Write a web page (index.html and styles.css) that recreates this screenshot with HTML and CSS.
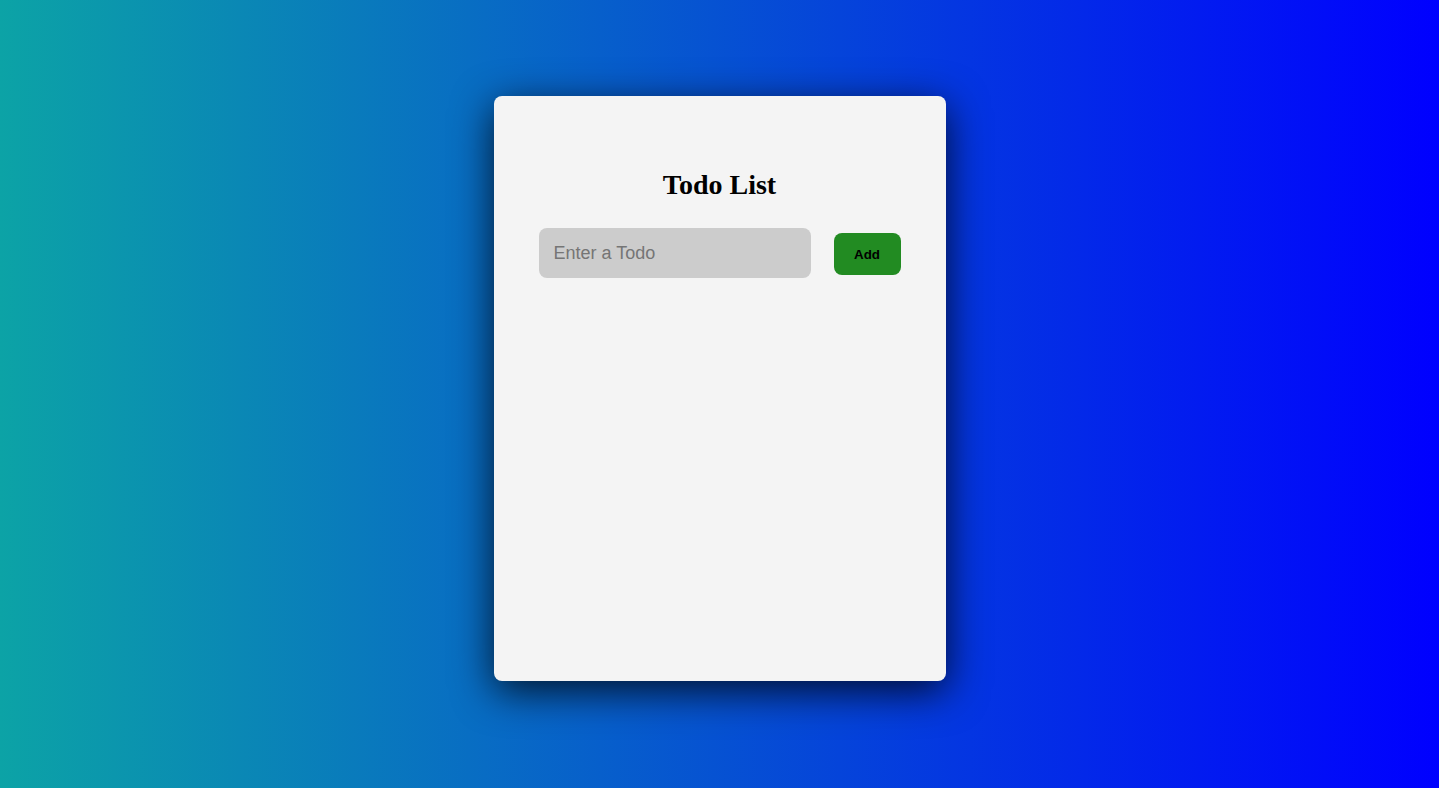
FILE: index.html
```html
<!DOCTYPE html>
<html lang="en">
<head>
<meta charset="UTF-8">
<title>Todo List</title>
<link rel="stylesheet" href="styles.css">
</head>
<body>
  <main class="page">
    <section class="card">
      <h1 class="title">Todo List</h1>
      <form class="todo-form">
        <input class="todo-input" type="text" placeholder="Enter a Todo">
        <button class="add-btn" type="button">Add</button>
      </form>
      <ul class="todo-list"></ul>
    </section>
  </main>
</body>
</html>
```

FILE: styles.css
```css
* {
  box-sizing: border-box;
}

html, body {
  margin: 0;
  height: 100%;
}

body {
  background: linear-gradient(to right, rgb(12, 163, 166), rgb(0, 0, 255));
  font-family: "Liberation Serif", "Times New Roman", serif;
}

.page {
  height: 100%;
  display: flex;
  justify-content: center;
  padding-top: 96px;
}

.card {
  width: 452px;
  height: 585px;
  background: #f4f4f4;
  border-radius: 8px;
  box-shadow: 0 10px 40px rgba(0, 0, 0, 0.8);
  padding: 73px 45px 0;
  display: flex;
  flex-direction: column;
  align-items: center;
}

.title {
  margin: 0;
  font-size: 28px;
  line-height: 32px;
  font-weight: bold;
  color: #000;
}

.todo-form {
  margin-top: 27px;
  display: flex;
  align-items: center;
  gap: 23px;
}

.todo-input {
  width: 272px;
  height: 50px;
  border: none;
  outline: none;
  border-radius: 8px;
  background: #cccccc;
  padding: 0 15px;
  font-family: "Liberation Sans", Arial, sans-serif;
  font-size: 18px;
  color: #333;
}

.todo-input::placeholder {
  color: #757575;
}

.add-btn {
  width: 67px;
  height: 42px;
  margin-top: 2px;
  border: none;
  border-radius: 8px;
  background: #228b22;
  color: #000;
  font-family: "Liberation Sans", Arial, sans-serif;
  font-size: 13.33px;
  font-weight: bold;
  padding: 0;
  cursor: pointer;
}

.todo-list {
  list-style: none;
  margin: 0;
  padding: 0;
}
```
